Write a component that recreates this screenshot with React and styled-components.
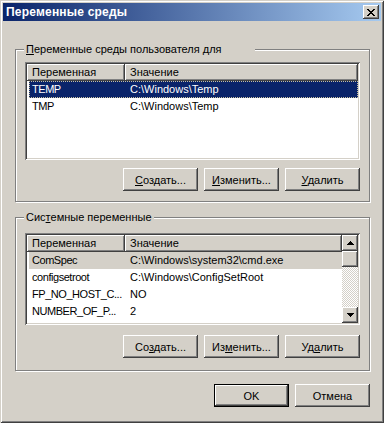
import React from 'react'
import styled, { createGlobalStyle } from 'styled-components'

const GlobalStyle = createGlobalStyle`
  html, body { margin: 0; padding: 0; background: #d4d0c8; }
  body {
    font-family: "Liberation Sans", Arial, sans-serif;
    font-size: 11px;
    color: #000;
  }
`

const raised = `
  box-shadow: inset -1px -1px 0 #404040, inset 1px 1px 0 #fff,
    inset -2px -2px 0 #808080, inset 2px 2px 0 #d4d0c8;
`

const Window = styled.div`
  width: 384px;
  height: 423px;
  box-sizing: border-box;
  padding: 3px;
  background: #d4d0c8;
  box-shadow: inset 1px 1px 0 #d4d0c8, inset -1px -1px 0 #404040,
    inset 2px 2px 0 #fff, inset -2px -2px 0 #808080;
  display: flex;
  flex-direction: column;
`

const TitleBar = styled.div`
  height: 18px;
  display: flex;
  align-items: center;
  justify-content: space-between;
  padding: 0 2px 0 3px;
  background: linear-gradient(to right, #0a246a, #a6caf0);
`

const Title = styled.span`
  color: #fff;
  font-weight: bold;
  font-size: 12px;
  letter-spacing: 0.2px;
`

const CloseBtn = styled.div`
  width: 16px;
  height: 14px;
  background: #d4d0c8;
  ${raised}
  display: flex;
  align-items: center;
  justify-content: center;
`

const Content = styled.div`
  padding: 0 11px 0 12px;
  display: flex;
  flex-direction: column;
`

const Group = styled.div`
  position: relative;
  margin-top: ${p => p.$top}px;
  border: 1px solid #808080;
  box-shadow: inset 1px 1px 0 #fff, 1px 1px 0 #fff;
  padding: ${p => p.$padTop}px 9px ${p => p.$padBottom}px 9px;
`

const GroupLabel = styled.span`
  position: absolute;
  top: -7px;
  left: 8px;
  line-height: 13px;
  padding: 0 ${p => p.$extra || 2}px 0 2px;
  background: #d4d0c8;
`

const ListView = styled.div`
  height: ${p => p.$h}px;
  box-sizing: border-box;
  padding: 2px;
  background: #fff;
  box-shadow: inset 1px 1px 0 #808080, inset -1px -1px 0 #fff,
    inset 2px 2px 0 #404040, inset -2px -2px 0 #d4d0c8;
  display: flex;
`

const Table = styled.div`
  flex: 1;
  min-width: 0;
  display: flex;
  flex-direction: column;
`

const Header = styled.div`
  display: flex;
  height: 17px;
  flex-shrink: 0;
`

const HeaderCell = styled.div`
  width: ${p => (p.$w ? `${p.$w}px` : 'auto')};
  flex: ${p => (p.$w ? 'none' : 1)};
  box-sizing: border-box;
  padding-left: 5px;
  line-height: 17px;
  background: #d4d0c8;
  box-shadow: inset -1px -1px 0 #404040, inset 1px 1px 0 #fff,
    inset -2px -2px 0 #808080;
  white-space: nowrap;
  overflow: hidden;
`

const Row = styled.div`
  display: flex;
  height: 17px;
  line-height: 17px;
  margin-left: 2px;
  background: ${p =>
    p.$sel === 'active' ? '#0a246a' : p.$sel === 'inactive' ? '#d4d0c8' : 'transparent'};
  color: ${p => (p.$sel === 'active' ? '#fff' : '#000')};
  outline: ${p => (p.$sel === 'active' ? '1px dotted #c8c0a0' : 'none')};
  outline-offset: -1px;
`

const NameCell = styled.div`
  width: 96px;
  flex: none;
  box-sizing: border-box;
  padding-left: 3px;
  white-space: nowrap;
  overflow: hidden;
  letter-spacing: -0.45px;
`

const ValueCell = styled.div`
  flex: 1;
  padding-left: 5px;
  white-space: nowrap;
  overflow: hidden;
`

const ScrollBar = styled.div`
  width: 16px;
  display: flex;
  flex-direction: column;
`

const ScrollBtn = styled.div`
  width: 16px;
  height: 16px;
  flex-shrink: 0;
  background: #d4d0c8;
  ${raised}
  display: flex;
  align-items: center;
  justify-content: center;
`

const Track = styled.div`
  flex: 1;
  background: repeating-conic-gradient(#d4d0c8 0 25%, #fff 0 50%) 0 0 / 2px 2px;
`

const ButtonRow = styled.div`
  display: flex;
  justify-content: flex-end;
  gap: 6px;
  margin-top: ${p => p.$top}px;
`

const Button = styled.div`
  width: 75px;
  height: 23px;
  box-sizing: border-box;
  display: flex;
  align-items: center;
  justify-content: center;
  background: #d4d0c8;
  border: ${p => (p.$default ? '1px solid #000' : 'none')};
  ${raised}
  white-space: nowrap;
  u { text-decoration: underline; text-underline-offset: 1px; }
`

const CloseGlyph = () => (
  <svg width="8" height="7" viewBox="0 0 8 7" shapeRendering="crispEdges">
    <path
      fill="#000"
      d="M0 0h2v1H0zM6 0h2v1H6zM1 1h2v1H1zM5 1h2v1H5zM2 2h4v1H2zM3 3h2v1H3zM2 4h4v1H2zM1 5h2v1H1zM5 5h2v1H5zM0 6h2v1H0zM6 6h2v1H6z"
    />
  </svg>
)

const Arrow = ({ down }) => (
  <svg width="7" height="4" viewBox="0 0 7 4" shapeRendering="crispEdges">
    <path
      fill="#000"
      d={down ? 'M0 0h7v1H0zM1 1h5v1H1zM2 2h3v1H2zM3 3h1v1H3z' : 'M3 0h1v1H3zM2 1h3v1H2zM1 2h5v1H1zM0 3h7v1H0z'}
    />
  </svg>
)

const userVars = [
  ['TEMP', 'C:\\Windows\\Temp', 'active'],
  ['TMP', 'C:\\Windows\\Temp'],
]

const sysVars = [
  ['ComSpec', 'C:\\Windows\\system32\\cmd.exe', 'inactive'],
  ['configsetroot', 'C:\\Windows\\ConfigSetRoot'],
  ['FP_NO_HOST_C...', 'NO'],
  ['NUMBER_OF_P...', '2'],
]

function VarList({ rows, height, scroll }) {
  return (
    <ListView $h={height}>
      <Table>
        <Header>
          <HeaderCell $w={98}>Переменная</HeaderCell>
          <HeaderCell>Значение</HeaderCell>
        </Header>
        {rows.map(([name, value, sel]) => (
          <Row key={name} $sel={sel}>
            <NameCell>{name}</NameCell>
            <ValueCell>{value}</ValueCell>
          </Row>
        ))}
      </Table>
      {scroll && (
        <ScrollBar>
          <ScrollBtn><Arrow /></ScrollBtn>
          <ScrollBtn />
          <Track />
          <ScrollBtn><Arrow down /></ScrollBtn>
        </ScrollBar>
      )}
    </ListView>
  )
}

export default function App() {
  return (
    <>
      <GlobalStyle />
      <Window>
        <TitleBar>
          <Title>Переменные среды</Title>
          <CloseBtn><CloseGlyph /></CloseBtn>
        </TitleBar>
        <Content>
          <Group $top={28} $padTop={12} $padBottom={10}>
            <GroupLabel $extra={33}><u>П</u>еременные среды пользователя для</GroupLabel>
            <VarList rows={userVars} height={98} />
            <ButtonRow $top={8}>
              <Button><span><u>С</u>оздать...</span></Button>
              <Button><span><u>И</u>зменить...</span></Button>
              <Button><span><u>У</u>далить</span></Button>
            </ButtonRow>
          </Group>
          <Group $top={15} $padTop={15} $padBottom={12}>
            <GroupLabel>Сис<u>т</u>емные переменные</GroupLabel>
            <VarList rows={sysVars} height={92} scroll />
            <ButtonRow $top={10}>
              <Button><span>Со<u>з</u>дать...</span></Button>
              <Button><span>Из<u>м</u>енить...</span></Button>
              <Button><span>Уд<u>а</u>лить</span></Button>
            </ButtonRow>
          </Group>
          <ButtonRow $top={13}>
            <Button $default>OK</Button>
            <Button>Отмена</Button>
          </ButtonRow>
        </Content>
      </Window>
    </>
  )
}
